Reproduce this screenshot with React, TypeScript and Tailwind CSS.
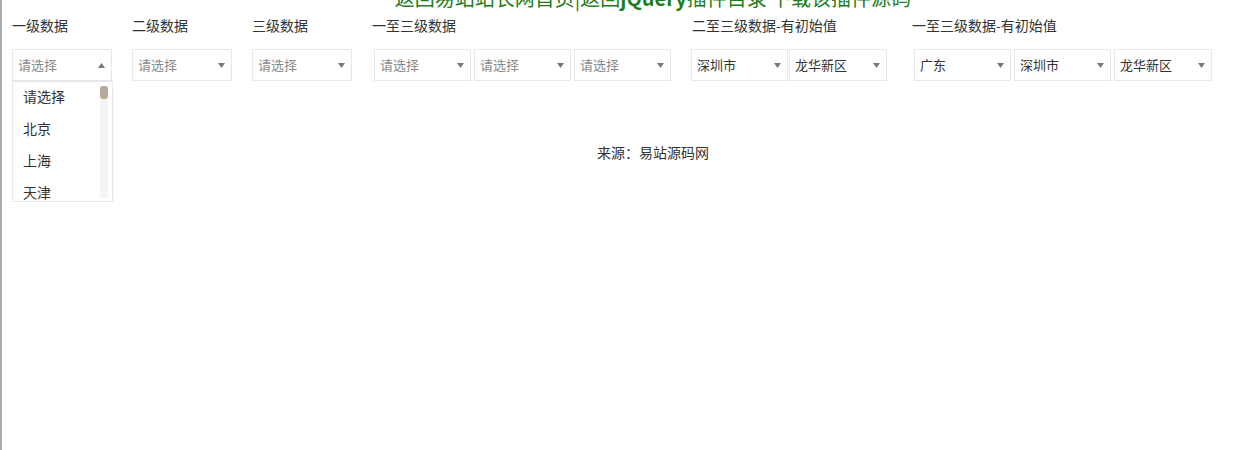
import React from "react";

const font = { fontFamily: '"Noto Sans CJK SC", "Noto Sans", sans-serif' };

function Arrow({ up }: { up?: boolean }) {
  return (
    <svg width="7" height="5" viewBox="0 0 7 5" className="shrink-0">
      {up ? (
        <polygon points="0,5 7,5 3.5,0" fill="#777" />
      ) : (
        <polygon points="0,0 7,0 3.5,5" fill="#777" />
      )}
    </svg>
  );
}

function Sel({
  text,
  placeholder,
  w,
  up,
  cls = "",
}: {
  text: string;
  placeholder?: boolean;
  w: string;
  up?: boolean;
  cls?: string;
}) {
  return (
    <div
      className={`h-[32px] ${w} ${cls} border border-[#e8e8e8] bg-white flex items-center justify-between pl-[5px] pr-[6px] text-[13px] ${
        placeholder ? "text-[#8a8a8a]" : "text-[#333]"
      }`}
    >
      <span>{text}</span>
      <Arrow up={up} />
    </div>
  );
}

function Label({ children, cls = "" }: { children: React.ReactNode; cls?: string }) {
  return <div className={`text-[14px] leading-[21px] text-[#333] whitespace-nowrap ${cls}`}>{children}</div>;
}

export default function App() {
  return (
    <div className="h-[450px] border-l-2 border-[#a3abb4] bg-white overflow-hidden" style={font}>
      <div className="mt-[-14px] h-[24px] pl-[48px] flex justify-center text-[20px] leading-[24px] text-[#1d7d1d] whitespace-nowrap">
        <span>
          返回易站站长网首页|返回<b>jQuery</b>插件目录 下载该插件源码
        </span>
      </div>
      <div className="relative mt-[5px] flex items-start pl-[10px]">
        <div className="flex flex-col">
          <Label>一级数据</Label>
          <div className="relative mt-[13px]">
            <Sel text="请选择" placeholder w="w-[100px]" up />
            <div className="absolute left-0 top-[32px] w-[101px] h-[121px] border border-[#e8e8e8] bg-white z-10 flex overflow-hidden">
              <div className="flex-1 flex flex-col pl-[10px] mt-[-2px] text-[14px] text-[#333]">
                <div className="h-[32px] shrink-0 flex items-center">请选择</div>
                <div className="h-[32px] shrink-0 flex items-center">北京</div>
                <div className="h-[32px] shrink-0 flex items-center">上海</div>
                <div className="h-[32px] shrink-0 flex items-center">天津</div>
              </div>
              <div className="w-[8px] mr-[4px] mt-[4px] mb-[3px] bg-[#f4f4f4] rounded-[3px] flex flex-col">
                <div className="h-[13px] w-[8px] rounded-[3px] bg-[#b8a89a]" />
              </div>
            </div>
          </div>
        </div>
        <div className="flex flex-col ml-[20px]">
          <Label>二级数据</Label>
          <div className="mt-[13px]">
            <Sel text="请选择" placeholder w="w-[100px]" />
          </div>
        </div>
        <div className="flex flex-col ml-[20px]">
          <Label>三级数据</Label>
          <div className="mt-[13px]">
            <Sel text="请选择" placeholder w="w-[100px]" />
          </div>
        </div>
        <div className="flex flex-col ml-[20px]">
          <Label>一至三级数据</Label>
          <div className="mt-[13px] ml-[2px] flex gap-[3px]">
            <Sel text="请选择" placeholder w="w-[97px]" />
            <Sel text="请选择" placeholder w="w-[97px]" />
            <Sel text="请选择" placeholder w="w-[97px]" />
          </div>
        </div>
        <div className="flex flex-col ml-[21px]">
          <Label>二至三级数据-有初始值</Label>
          <div className="mt-[13px] ml-[-1px] flex gap-[1px]">
            <Sel text="深圳市" w="w-[97px]" />
            <Sel text="龙华新区" w="w-[98px]" />
          </div>
        </div>
        <div className="flex flex-col ml-[25px]">
          <Label>一至三级数据-有初始值</Label>
          <div className="mt-[13px] ml-[2px] flex gap-[3px]">
            <Sel text="广东" w="w-[97px]" />
            <Sel text="深圳市" w="w-[97px]" />
            <Sel text="龙华新区" w="w-[98px]" />
          </div>
        </div>
      </div>
      <div className="mt-[61px] pl-[48px] flex justify-center text-[14px] leading-[21px] text-[#333]">
        来源：易站源码网
      </div>
    </div>
  );
}
